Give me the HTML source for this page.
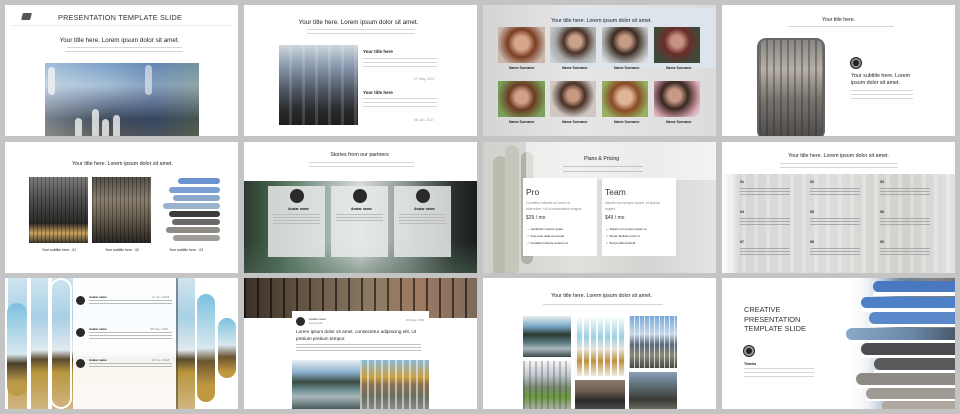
<!DOCTYPE html>
<html><head><meta charset="utf-8"><style>
*{margin:0;padding:0;box-sizing:border-box}
body{width:960px;height:414px;background:#c4c4c4;font-family:"Liberation Sans",sans-serif;position:relative;overflow:hidden;color:#222}
.s{position:absolute;width:233px;height:131px;background:#fff;overflow:hidden}
.a{position:absolute}
.t{position:absolute;font-size:7.5px;color:#222;white-space:nowrap}
.ct{position:absolute;left:0;width:233px;text-align:center;color:#222;white-space:nowrap}
.sm{position:absolute;height:2px;background:#d6d6d6}
.pill{position:absolute;border-radius:12px}
</style></head><body>

<!-- Row 1 -->
<div class="s" style="left:5px;top:5px">
  <div class="a" style="left:17px;top:8px;width:9px;height:7px;background:#555;transform:skewX(-15deg);border-radius:1px"></div>
  <div class="t" style="left:53px;top:8px;font-size:7.3px;color:#333;letter-spacing:.2px">PRESENTATION TEMPLATE SLIDE</div>
  <div class="a" style="left:6px;top:20px;width:221px;height:1px;background:#eee"></div>
  <div class="ct" style="left:-2px;top:32px;font-size:6.3px">Your title here. Lorem ipsum dolor sit amet.</div>
  <div class="sm" style="left:62px;top:42px;width:115px;height:1px"></div>
  <div class="sm" style="left:60px;top:46px;width:118px;height:1px"></div>
  <div class="a" style="left:40px;top:58px;width:154px;height:75px;background:linear-gradient(180deg,#7aa0c8 0%,#a6bfd6 30%,#6d7d95 55%,#3d4a58 75%,#5b5a55 100%)"></div>
  <div class="a" style="left:40px;top:58px;width:154px;height:75px;background:linear-gradient(90deg,rgba(255,255,255,.3) 0,rgba(255,255,255,0) 40%,rgba(30,60,120,.25) 70%,rgba(90,110,60,.3) 100%)"></div>
  <div class="pill" style="left:43px;top:62px;width:7px;height:28px;background:#f2f2f2;opacity:.8"></div>
  <div class="pill" style="left:70px;top:113px;width:7px;height:20px;background:#f2f2f2;opacity:.8"></div>
  <div class="pill" style="left:87px;top:104px;width:7px;height:29px;background:#f2f2f2;opacity:.8"></div>
  <div class="pill" style="left:97px;top:114px;width:7px;height:19px;background:#f2f2f2;opacity:.8"></div>
  <div class="pill" style="left:108px;top:110px;width:7px;height:23px;background:#f2f2f2;opacity:.8"></div>
  <div class="pill" style="left:140px;top:60px;width:7px;height:30px;background:#f2f2f2;opacity:.6"></div>
</div>

<div class="s" style="left:244px;top:5px">
  <div class="ct" style="left:-2px;top:14px;font-size:6.3px">Your title here. Lorem ipsum dolor sit amet.</div>
  <div class="sm" style="left:63px;top:24px;width:108px;height:1px"></div>
  <div class="sm" style="left:63px;top:28px;width:108px;height:1px"></div>
  <div class="a" style="left:35px;top:40px;width:79px;height:80px;background:linear-gradient(180deg,#cfd6dc 0%,#8b9ab0 25%,#515a66 55%,#2a2c2e 80%,#1d1d1d 100%)"></div>
  <div class="a" style="left:35px;top:40px;width:79px;height:80px;background:repeating-linear-gradient(90deg,rgba(255,255,255,0) 0 10px,rgba(255,255,255,.15) 10px 13px)"></div>
  <div class="t" style="left:119px;top:44px;font-size:4.5px;font-weight:bold">Your title here</div>
  <div class="sm" style="left:119px;top:53px;width:74px;height:1px"></div>
  <div class="sm" style="left:119px;top:57px;width:74px;height:1px"></div>
  <div class="sm" style="left:119px;top:61px;width:74px;height:1px"></div>
  <div class="t" style="left:170px;top:72px;font-size:3.5px;color:#999">17 May, 2017</div>
  <div class="t" style="left:119px;top:85px;font-size:4.5px;font-weight:bold">Your title here</div>
  <div class="sm" style="left:119px;top:93px;width:74px;height:1px"></div>
  <div class="sm" style="left:119px;top:97px;width:74px;height:1px"></div>
  <div class="sm" style="left:119px;top:101px;width:74px;height:1px"></div>
  <div class="t" style="left:170px;top:113px;font-size:3.5px;color:#999">06 Jun, 2017</div>
</div>

<div class="s" style="left:483px;top:5px;background:linear-gradient(90deg,#d4d4d4,#e6e6e6 40%,#dcdcdc)">
  <div class="a" style="left:70px;top:3px;width:165px;height:60px;background:#dde4ec;border-radius:20px 0 0 20px"></div>
  <div class="ct" style="left:2px;top:13px;font-size:5.3px">Your title here. Lorem ipsum dolor sit amet.</div>
  <div class="a" style="left:15px;top:22px;width:47px;height:36px;background:radial-gradient(circle at 50% 45%,#d8a78a 0 22%,#7a3d22 45%,#c9b7aa 80%)"></div>
  <div class="a" style="left:67px;top:22px;width:46px;height:36px;background:radial-gradient(circle at 55% 40%,#caa08a 0 18%,#4a3228 35%,#a6a8a8 60%,#cfd2d4 90%)"></div>
  <div class="a" style="left:119px;top:22px;width:46px;height:36px;background:radial-gradient(circle at 50% 40%,#c79b84 0 18%,#3b2a22 40%,#a9aaa8 70%,#ddd 90%)"></div>
  <div class="a" style="left:171px;top:22px;width:46px;height:36px;background:radial-gradient(circle at 50% 40%,#c69384 0 18%,#6b2d2a 40%,#3d4a3a 75%)"></div>
  <div class="a" style="left:15px;top:76px;width:47px;height:36px;background:radial-gradient(circle at 50% 45%,#d0a08a 0 20%,#6a3a22 42%,#7aa05a 80%)"></div>
  <div class="a" style="left:67px;top:76px;width:46px;height:36px;background:radial-gradient(circle at 50% 40%,#c89880 0 18%,#4a3025 38%,#cfc8c2 70%)"></div>
  <div class="a" style="left:119px;top:76px;width:46px;height:36px;background:radial-gradient(circle at 50% 45%,#e0b598 0 22%,#8a4a26 45%,#94b060 80%)"></div>
  <div class="a" style="left:171px;top:76px;width:46px;height:36px;background:radial-gradient(circle at 45% 40%,#c89a86 0 18%,#3a2620 40%,#d9a4b0 75%,#e0e0e0 95%)"></div>
  <div class="t" style="left:26px;top:61px;font-size:3.5px;font-weight:bold">Name Surname</div>
  <div class="t" style="left:79px;top:61px;font-size:3.5px;font-weight:bold">Name Surname</div>
  <div class="t" style="left:131px;top:61px;font-size:3.5px;font-weight:bold">Name Surname</div>
  <div class="t" style="left:183px;top:61px;font-size:3.5px;font-weight:bold">Name Surname</div>
  <div class="t" style="left:26px;top:115px;font-size:3.5px;font-weight:bold">Name Surname</div>
  <div class="t" style="left:79px;top:115px;font-size:3.5px;font-weight:bold">Name Surname</div>
  <div class="t" style="left:131px;top:115px;font-size:3.5px;font-weight:bold">Name Surname</div>
  <div class="t" style="left:183px;top:115px;font-size:3.5px;font-weight:bold">Name Surname</div>
</div>

<div class="s" style="left:722px;top:5px">
  <div class="ct" style="left:0;top:12px;font-size:5.2px">Your title here.</div>
  <div class="sm" style="left:66px;top:21px;width:106px;height:1px"></div>
  <div class="a" style="left:35px;top:33px;width:68px;height:102px;border:2px solid #666;border-radius:9px;background:linear-gradient(180deg,#8a8783 0%,#b6b0a8 30%,#7a7470 60%,#4e4b48 100%)"></div>
  <div class="a" style="left:37px;top:35px;width:64px;height:98px;border-radius:7px;background:repeating-linear-gradient(90deg,rgba(40,40,40,.35) 0 2px,rgba(255,255,255,0) 2px 7px)"></div>
  <div class="a" style="left:129px;top:53px;width:10px;height:10px;border-radius:50%;background:#222;border:2px solid #888;box-shadow:0 0 0 1px #222"></div>
  <div class="t" style="left:129px;top:68px;font-size:5.3px;line-height:7px">Your subtitle here. Lorem<br>ipsum dolor sit amet.</div>
  <div class="sm" style="left:129px;top:85px;width:62px;height:1px"></div>
  <div class="sm" style="left:129px;top:89px;width:62px;height:1px"></div>
  <div class="sm" style="left:129px;top:93px;width:62px;height:1px"></div>
</div>

<!-- Row 2 -->
<div class="s" style="left:5px;top:142px">
  <div class="ct" style="left:1px;top:19px;font-size:5.3px">Your title here. Lorem ipsum dolor sit amet.</div>
  <div class="a" style="left:24px;top:35px;width:59px;height:66px;background:linear-gradient(180deg,#7a7a78 0%,#4a4846 40%,#2b2a28 70%,#c9a060 85%,#3a352e 100%)"></div>
  <div class="a" style="left:24px;top:35px;width:59px;height:66px;background:repeating-linear-gradient(90deg,rgba(0,0,0,.3) 0 1px,rgba(0,0,0,0) 1px 4px)"></div>
  <div class="a" style="left:87px;top:35px;width:59px;height:66px;background:linear-gradient(180deg,#55504a 0%,#8a7e6e 35%,#6a6050 60%,#2a2622 100%)"></div>
  <div class="a" style="left:87px;top:35px;width:59px;height:66px;background:repeating-linear-gradient(90deg,rgba(0,0,0,.3) 0 1px,rgba(0,0,0,0) 1px 4px)"></div>
  <div class="pill" style="left:173px;top:36px;width:42px;height:6px;background:#6a92d0"></div>
  <div class="pill" style="left:164px;top:45px;width:51px;height:6px;background:#7aa0d4"></div>
  <div class="pill" style="left:168px;top:53px;width:47px;height:6px;background:#8aa8cc"></div>
  <div class="pill" style="left:158px;top:61px;width:57px;height:6px;background:#9ab2cc"></div>
  <div class="pill" style="left:164px;top:69px;width:51px;height:6px;background:#3c3c3e"></div>
  <div class="pill" style="left:167px;top:77px;width:48px;height:6px;background:#6a6a6a"></div>
  <div class="pill" style="left:161px;top:85px;width:54px;height:6px;background:#8e8a86"></div>
  <div class="pill" style="left:168px;top:93px;width:47px;height:6px;background:#a09c98"></div>
  <div class="t" style="left:37px;top:106px;font-size:3.5px">Your subtitle here - 01</div>
  <div class="t" style="left:100px;top:106px;font-size:3.5px">Your subtitle here - 02</div>
  <div class="t" style="left:164px;top:106px;font-size:3.5px">Your subtitle here - 03</div>
</div>

<div class="s" style="left:244px;top:142px">
  <div class="ct" style="left:-1px;top:10px;font-size:5.3px">Stories from our partners</div>
  <div class="sm" style="left:65px;top:20px;width:105px;height:1px"></div>
  <div class="sm" style="left:65px;top:24px;width:105px;height:1px"></div>
  <div class="a" style="left:0;top:39px;width:233px;height:92px;background:linear-gradient(90deg,#2c3a30 0%,#4a6a52 15%,#9fb0a8 35%,#d8dcdc 50%,#8a9290 70%,#2a302e 90%,#1a1e1e 100%)"></div>
  <div class="a" style="left:0;top:100px;width:233px;height:31px;background:linear-gradient(180deg,rgba(120,150,130,0),rgba(80,110,90,.5))"></div>
  <div class="a" style="left:24px;top:44px;width:57px;height:71px;background:rgba(232,234,234,.85)"></div>
  <div class="a" style="left:87px;top:44px;width:57px;height:71px;background:rgba(232,234,234,.85)"></div>
  <div class="a" style="left:150px;top:44px;width:57px;height:71px;background:rgba(232,234,234,.85)"></div>
  <div class="a" style="left:46px;top:47px;width:14px;height:14px;border-radius:50%;background:#2a2a2a"></div>
  <div class="a" style="left:109px;top:47px;width:14px;height:14px;border-radius:50%;background:#2a2a2a"></div>
  <div class="a" style="left:172px;top:47px;width:14px;height:14px;border-radius:50%;background:#2a2a2a"></div>
  <div class="t" style="left:44px;top:65px;font-size:3.5px;font-weight:bold">Avatar name</div>
  <div class="t" style="left:107px;top:65px;font-size:3.5px;font-weight:bold">Avatar name</div>
  <div class="t" style="left:170px;top:65px;font-size:3.5px;font-weight:bold">Avatar name</div>
  <div class="sm" style="left:29px;top:72px;width:47px;height:10px;background:repeating-linear-gradient(180deg,#bbb 0 1px,transparent 1px 3px)"></div>
  <div class="sm" style="left:92px;top:72px;width:47px;height:8px;background:repeating-linear-gradient(180deg,#bbb 0 1px,transparent 1px 3px)"></div>
  <div class="sm" style="left:155px;top:72px;width:47px;height:12px;background:repeating-linear-gradient(180deg,#bbb 0 1px,transparent 1px 3px)"></div>
</div>

<div class="s" style="left:483px;top:142px;background:linear-gradient(90deg,#cfd1cc 0%,#e0e0dc 40%,#d4d4d2 70%,#e4e4e4 100%)">
  <div class="pill" style="left:10px;top:14px;width:14px;height:120px;background:#b8bdb0"></div>
  <div class="pill" style="left:22px;top:3px;width:14px;height:130px;background:#c4c8bc"></div>
  <div class="pill" style="left:38px;top:10px;width:12px;height:112px;background:#aeb2a6"></div>
  <div class="a" style="left:43px;top:0;width:190px;height:38px;background:rgba(255,255,255,.55)"></div>
  <div class="t" style="left:101px;top:14px;font-size:5.2px">Plans &amp; Pricing</div>
  <div class="sm" style="left:80px;top:24px;width:80px;height:1px;background:#c4c4c4"></div>
  <div class="sm" style="left:80px;top:29px;width:80px;height:1px;background:#c4c4c4"></div>
  <div class="a" style="left:40px;top:36px;width:74px;height:78px;background:#fff"></div>
  <div class="a" style="left:119px;top:36px;width:74px;height:78px;background:#fff"></div>
  <div class="t" style="left:43px;top:45px;font-size:8.5px;color:#333">Pro</div>
  <div class="t" style="left:122px;top:45px;font-size:8.5px;color:#333">Team</div>
  <div class="t" style="left:43px;top:58px;font-size:3.5px;color:#888;line-height:6px">Curabitur lobortis id lorem id<br>bibendum. Ut id consectetur magna.</div>
  <div class="t" style="left:122px;top:58px;font-size:3.5px;color:#888;line-height:6px">Mauris non tempor quam, et lacinia<br>sapien.</div>
  <div class="t" style="left:43px;top:73px;font-size:5px;color:#333">$29 / mo</div>
  <div class="t" style="left:122px;top:73px;font-size:5px;color:#333">$49 / mo</div>
  <div class="t" style="left:44px;top:84px;font-size:3px;line-height:7px">— Vestibulum auctor quam<br>✓ Cras quis nulla commodo<br>✓ Curabitur lobortis id lorem id</div>
  <div class="t" style="left:123px;top:84px;font-size:3px;line-height:7px">— Mauris non tempor quam et<br>✓ Donec facilisis tortor ut<br>✓ Sed porttitor blandit</div>
</div>

<div class="s" style="left:722px;top:142px">
  <div class="ct" style="left:0;top:11px;font-size:5.3px">Your title here. Lorem ipsum dolor sit amet.</div>
  <div class="sm" style="left:58px;top:21px;width:118px;height:1px"></div>
  <div class="sm" style="left:58px;top:25px;width:118px;height:1px"></div>
  <div class="a" style="left:0;top:32px;width:233px;height:99px;background:linear-gradient(90deg,#fff 0%,#d6d6d4 8%,#dcdcda 50%,#d0d0cc 80%,#e2e2e2 100%)"></div>
  <div class="a" style="left:0;top:32px;width:233px;height:99px;background:repeating-linear-gradient(90deg,rgba(255,255,255,0) 0 8px,rgba(255,255,255,.25) 8px 12px)"></div>
  <div class="t" style="left:18px;top:38px;font-size:3.5px;font-weight:bold">01</div>
  <div class="t" style="left:88px;top:38px;font-size:3.5px;font-weight:bold">02</div>
  <div class="t" style="left:158px;top:38px;font-size:3.5px;font-weight:bold">03</div>
  <div class="t" style="left:18px;top:68px;font-size:3.5px;font-weight:bold">04</div>
  <div class="t" style="left:88px;top:68px;font-size:3.5px;font-weight:bold">05</div>
  <div class="t" style="left:158px;top:68px;font-size:3.5px;font-weight:bold">06</div>
  <div class="t" style="left:18px;top:98px;font-size:3.5px;font-weight:bold">07</div>
  <div class="t" style="left:88px;top:98px;font-size:3.5px;font-weight:bold">08</div>
  <div class="t" style="left:158px;top:98px;font-size:3.5px;font-weight:bold">09</div>
  <div class="sm" style="left:18px;top:46px;width:50px;height:9px;background:repeating-linear-gradient(180deg,#aaa 0 1px,transparent 1px 3px)"></div>
  <div class="sm" style="left:88px;top:46px;width:50px;height:9px;background:repeating-linear-gradient(180deg,#aaa 0 1px,transparent 1px 3px)"></div>
  <div class="sm" style="left:158px;top:46px;width:50px;height:9px;background:repeating-linear-gradient(180deg,#aaa 0 1px,transparent 1px 3px)"></div>
  <div class="sm" style="left:18px;top:76px;width:50px;height:9px;background:repeating-linear-gradient(180deg,#aaa 0 1px,transparent 1px 3px)"></div>
  <div class="sm" style="left:88px;top:76px;width:50px;height:9px;background:repeating-linear-gradient(180deg,#aaa 0 1px,transparent 1px 3px)"></div>
  <div class="sm" style="left:158px;top:76px;width:50px;height:9px;background:repeating-linear-gradient(180deg,#aaa 0 1px,transparent 1px 3px)"></div>
  <div class="sm" style="left:18px;top:106px;width:50px;height:9px;background:repeating-linear-gradient(180deg,#aaa 0 1px,transparent 1px 3px)"></div>
  <div class="sm" style="left:88px;top:106px;width:50px;height:9px;background:repeating-linear-gradient(180deg,#aaa 0 1px,transparent 1px 3px)"></div>
  <div class="sm" style="left:158px;top:106px;width:50px;height:9px;background:repeating-linear-gradient(180deg,#aaa 0 1px,transparent 1px 3px)"></div>
</div>

<!-- Row 3 -->
<div class="s" style="left:5px;top:278px;background:linear-gradient(180deg,#cfe4ef 0%,#a8d0e6 30%,#e0eaee 55%,#5a4a30 62%,#b8963c 72%,#d2b684 100%)">
  <div class="a" style="left:0;top:0;width:3px;height:131px;background:#fff"></div>
  <div class="a" style="left:22px;top:0;width:4px;height:131px;background:#fff"></div>
  <div class="a" style="left:43px;top:0;width:4px;height:131px;background:#fff"></div>
  <div class="pill" style="left:2px;top:25px;width:20px;height:93px;border-radius:10px;background:linear-gradient(180deg,#7cc0e0,#d8e8ee 55%,#4a3e2a 65%,#bd9a48 85%)"></div>
  <div class="pill" style="left:45px;top:0;width:22px;height:131px;border-radius:11px;background:transparent;box-shadow:0 0 0 2px #fff inset"></div>
  <div class="a" style="left:68px;top:0;width:103px;height:131px;background:rgba(255,255,255,.93)"></div>
  <div class="a" style="left:171px;top:0;width:2px;height:131px;background:#3a3a3a;opacity:.5"></div>
  <div class="a" style="left:190px;top:0;width:43px;height:131px;background:#fff"></div>
  <div class="pill" style="left:192px;top:16px;width:18px;height:108px;border-radius:9px;background:linear-gradient(180deg,#7cc0e0,#d8e8ee 50%,#6a5430 62%,#c09840 85%)"></div>
  <div class="pill" style="left:213px;top:40px;width:18px;height:60px;border-radius:9px;background:linear-gradient(180deg,#7cc0e0,#d8e8ee 45%,#6a5430 65%,#c09840 90%)"></div>
  <div class="a" style="left:71px;top:18px;width:9px;height:9px;border-radius:50%;background:#2a2a2a"></div>
  <div class="a" style="left:71px;top:50px;width:9px;height:9px;border-radius:50%;background:#2a2a2a"></div>
  <div class="a" style="left:71px;top:81px;width:9px;height:9px;border-radius:50%;background:#2a2a2a"></div>
  <div class="t" style="left:84px;top:17px;font-size:3px;font-weight:bold">Avatar name</div>
  <div class="t" style="left:84px;top:49px;font-size:3px;font-weight:bold">Avatar name</div>
  <div class="t" style="left:84px;top:80px;font-size:3px;font-weight:bold">Avatar name</div>
  <div class="t" style="left:147px;top:17px;font-size:3px;color:#888">11 Jun, 2018</div>
  <div class="t" style="left:145px;top:49px;font-size:3px;color:#888">28 May, 2018</div>
  <div class="t" style="left:147px;top:80px;font-size:3px;color:#888">15 Jun, 2018</div>
  <div class="sm" style="left:84px;top:22px;width:83px;height:5px;background:repeating-linear-gradient(180deg,#bbb 0 1px,transparent 1px 3px)"></div>
  <div class="sm" style="left:84px;top:54px;width:83px;height:8px;background:repeating-linear-gradient(180deg,#bbb 0 1px,transparent 1px 3px)"></div>
  <div class="sm" style="left:84px;top:85px;width:83px;height:5px;background:repeating-linear-gradient(180deg,#bbb 0 1px,transparent 1px 3px)"></div>
</div>

<div class="s" style="left:244px;top:278px">
  <div class="a" style="left:0;top:0;width:233px;height:40px;background:linear-gradient(90deg,#3a3028,#6a5a48 30%,#8c7a64 55%,#a07a62 75%,#7a6a5a 100%)"></div>
  <div class="a" style="left:0;top:0;width:233px;height:40px;background:repeating-linear-gradient(90deg,rgba(0,0,0,.55) 0 2px,rgba(0,0,0,0) 2px 13px)"></div>
  <div class="a" style="left:48px;top:33px;width:137px;height:98px;background:#fff"></div>
  <div class="a" style="left:52px;top:39px;width:9px;height:9px;border-radius:50%;background:#2a2a2a"></div>
  <div class="t" style="left:65px;top:39px;font-size:3px">Avatar name</div>
  <div class="t" style="left:65px;top:43px;font-size:3px;color:#888">Lead post</div>
  <div class="t" style="left:162px;top:40px;font-size:3px;color:#888">20 May, 2018</div>
  <div class="t" style="left:52px;top:51px;font-size:4.7px;line-height:6.5px">Lorem ipsum dolor sit amet, consectetur adipiscing elit. Ut<br>pretium pretium tempor.</div>
  <div class="sm" style="left:52px;top:66px;width:125px;height:8px;background:repeating-linear-gradient(180deg,#c4c4c4 0 1px,transparent 1px 3px)"></div>
  <div class="a" style="left:48px;top:82px;width:68px;height:49px;background:linear-gradient(180deg,#e8eef2 0%,#8ab0d0 25%,#3a4a40 45%,#6a8a90 60%,#aab8bc 75%,#4a5a5a 100%)"></div>
  <div class="a" style="left:116px;top:82px;width:69px;height:49px;background:linear-gradient(180deg,#8ab8d8 0%,#c8a040 35%,#8a7050 50%,#6a7060 75%,#8a8a88 100%)"></div>
  <div class="a" style="left:116px;top:82px;width:69px;height:49px;background:repeating-linear-gradient(90deg,rgba(255,255,255,.5) 0 2px,rgba(255,255,255,0) 2px 7px)"></div>
</div>

<div class="s" style="left:483px;top:278px">
  <div class="ct" style="left:2px;top:15px;font-size:5.3px">Your title here. Lorem ipsum dolor sit amet.</div>
  <div class="sm" style="left:60px;top:26px;width:120px;height:1px"></div>
  <div class="a" style="left:40px;top:38px;width:48px;height:41px;background:linear-gradient(180deg,#e8eef0 0%,#7aa8c8 25%,#2a3a30 45%,#5a7a80 65%,#a8b8bc 80%,#3a4a48 100%)"></div>
  <div class="a" style="left:40px;top:83px;width:48px;height:48px;background:linear-gradient(180deg,#f4f4f4 0%,#c0c8d0 30%,#7a8a70 55%,#6a9a40 75%,#b0b0a8 100%)"></div>
  <div class="a" style="left:40px;top:83px;width:48px;height:48px;background:repeating-linear-gradient(90deg,rgba(40,40,40,.4) 0 2px,rgba(255,255,255,0) 2px 6px);opacity:.6"></div>
  <div class="a" style="left:92px;top:38px;width:50px;height:60px;background:linear-gradient(180deg,#fff 0%,#9cd0e4 35%,#e8e4dc 55%,#c09040 75%,#f0ece4 100%)"></div>
  <div class="a" style="left:92px;top:38px;width:50px;height:60px;background:repeating-linear-gradient(90deg,rgba(255,255,255,.9) 0 2px,rgba(255,255,255,0) 2px 7px)"></div>
  <div class="a" style="left:92px;top:102px;width:50px;height:29px;background:linear-gradient(180deg,#8a7a70 0%,#6a5a50 40%,#2a2a2a 70%,#4a4a4a 100%)"></div>
  <div class="a" style="left:146px;top:38px;width:48px;height:52px;background:linear-gradient(180deg,#7aa8d8 0%,#c8d8e8 35%,#5a6a7a 55%,#8a8a7a 75%,#4a4a44 100%)"></div>
  <div class="a" style="left:146px;top:38px;width:48px;height:52px;background:repeating-linear-gradient(90deg,rgba(255,255,255,.7) 0 1px,rgba(255,255,255,0) 1px 5px)"></div>
  <div class="a" style="left:146px;top:94px;width:48px;height:37px;background:linear-gradient(180deg,#8aa0b8 0%,#5a6a70 40%,#3a3a38 75%,#6a6a60 100%)"></div>
</div>

<div class="s" style="left:722px;top:278px">
  <div class="a" style="left:125px;top:0;width:108px;height:131px;background:linear-gradient(90deg,#fff 0%,#9eb0c4 30%,#6e8298 55%,#8a8680 80%,#7a7670 100%)"></div>
  <div class="a" style="left:125px;top:0;width:108px;height:131px;background:linear-gradient(90deg,#fff 0%,rgba(255,255,255,.7) 20%,rgba(255,255,255,0) 45%)"></div>
  <div class="pill" style="left:151px;top:3px;width:82px;height:11px;border-radius:6px 0 0 6px;background:#4a78c0"></div>
  <div class="a" style="left:151px;top:14px;width:82px;height:4px;background:#fff"></div>
  <div class="pill" style="left:139px;top:19px;width:94px;height:11px;border-radius:6px 0 0 6px;background:#4e80c8"></div>
  <div class="a" style="left:139px;top:30px;width:94px;height:4px;background:#fff"></div>
  <div class="pill" style="left:147px;top:34px;width:86px;height:12px;border-radius:6px 0 0 6px;background:#5a88c8"></div>
  <div class="a" style="left:147px;top:46px;width:86px;height:3px;background:#fff"></div>
  <div class="pill" style="left:124px;top:50px;width:109px;height:12px;border-radius:6px 0 0 6px;background:linear-gradient(90deg,#8aa8c8,#6a88a8 60%,#4a5a6a)"></div>
  <div class="a" style="left:124px;top:62px;width:109px;height:3px;background:#fff"></div>
  <div class="pill" style="left:139px;top:65px;width:94px;height:12px;border-radius:6px 0 0 6px;background:#4a4c50"></div>
  <div class="a" style="left:139px;top:77px;width:94px;height:3px;background:#fff"></div>
  <div class="pill" style="left:152px;top:80px;width:81px;height:12px;border-radius:6px 0 0 6px;background:#5a5a5c"></div>
  <div class="a" style="left:152px;top:92px;width:81px;height:3px;background:#fff"></div>
  <div class="pill" style="left:134px;top:95px;width:99px;height:12px;border-radius:6px 0 0 6px;background:#8e8a86"></div>
  <div class="a" style="left:134px;top:107px;width:99px;height:3px;background:#fff"></div>
  <div class="pill" style="left:144px;top:110px;width:89px;height:11px;border-radius:6px 0 0 6px;background:#a09a94"></div>
  <div class="a" style="left:144px;top:121px;width:89px;height:2px;background:#fff"></div>
  <div class="pill" style="left:160px;top:123px;width:73px;height:10px;border-radius:6px 0 0 6px;background:#b0a89e"></div>
  <div class="t" style="left:22px;top:27px;font-size:7.4px;line-height:9.5px;color:#333">CREATIVE<br>PRESENTATION<br>TEMPLATE SLIDE</div>
  <div class="a" style="left:22px;top:68px;width:10px;height:10px;border-radius:50%;background:#222;border:2px solid #999;box-shadow:0 0 0 1px #222"></div>
  <div class="t" style="left:22px;top:84px;font-size:3.5px;font-weight:bold">Thanks</div>
  <div class="sm" style="left:22px;top:90px;width:70px;height:1px"></div>
  <div class="sm" style="left:22px;top:94px;width:70px;height:1px"></div>
  <div class="sm" style="left:22px;top:98px;width:70px;height:1px"></div>
</div>

</body></html>
